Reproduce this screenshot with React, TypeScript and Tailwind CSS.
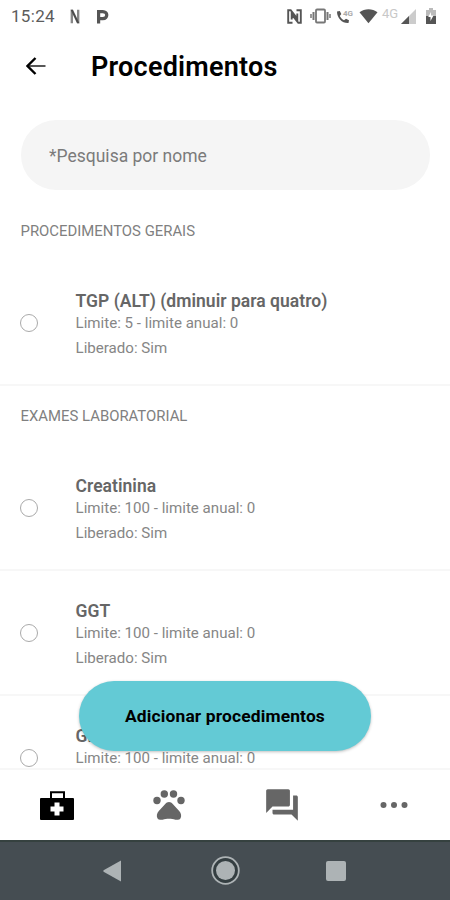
import { MdForum } from "react-icons/md";

type Procedure = {
  name: string;
  limit: number;
};

const general: Procedure[] = [{ name: "TGP (ALT) (dminuir para quatro)", limit: 5 }];

const lab: Procedure[] = [
  { name: "Creatinina", limit: 100 },
  { name: "GGT", limit: 100 },
  { name: "Glicose", limit: 100 },
];

const StatusBar = () => {
  return (
    <div className="h-8 shrink-0 flex items-center text-[#5c5c5c]">
      <div className="ml-[11px] w-[59px] text-[17px] leading-8 tracking-[0.3px]">15:24</div>
      <svg className="w-[10px] h-[17px]" viewBox="0 0 11 17">
        <path d="M2 1v15M9 1v15" stroke="#888" strokeWidth="2.6" />
        <path d="M.7 1h2.600l7 15H7.700z" fill="#4c4c4c" />
      </svg>
      <svg className="ml-4 w-[13px] h-[15px]" viewBox="0 0 13 15" fill="none" stroke="#555" strokeWidth="3.200">
        <path d="M2.600 14.500V2.600h4.200c5.300 0 5.300 7 0 7H2.600" />
      </svg>

      <div className="ml-auto mr-[14px] flex items-center">
        <svg className="w-[15px] h-[15px]" viewBox="0 0 15 15" fill="none" stroke="#555">
          <path d="M5.500 13.800H1.200V1.200h2.500l6.600 8.300V4.500M9.500 1.200h4.300v12.600h-2.500L4.700 5.500v5" strokeWidth="1.900" />
        </svg>
        <svg className="ml-2 w-[21px] h-4" viewBox="0 0 21 16" fill="none" stroke="#777">
          <rect x="6" y="1.500" width="9" height="13" rx="1" strokeWidth="1.800" />
          <path d="M3.500 4v8M17.500 4v8" strokeWidth="2" />
          <path d="M1 6v4M20 6v4" strokeWidth="1.500" />
        </svg>
        <svg className="ml-[5px] w-[18px] h-4" viewBox="0 0 18 16">
          <path
            d="M1 3.500 3.800 3l1.500 3-1.500 2c1 2 2.300 3.300 4.200 4.300l2-1.500 3 1.500-.5 2.700C6.500 15.500 1 10.500 1 3.500z"
            fill="#555"
          />
          <text x="7" y="7.500" fontSize="8" fontWeight="700" fill="#aaa">4G</text>
        </svg>
        <svg className="ml-[5px] w-[19px] h-4" viewBox="0 0 20 16">
          <path d="M.5 4C6-.2 14-.2 19.500 4L10 15.500z" fill="#555" />
        </svg>
        <div className="ml-[4px] w-[19px] text-[13px] leading-3 -mt-1 text-[#c8c8c8]">4G</div>
        <svg className="w-[15px] h-[15px]" viewBox="0 0 15 15">
          <path d="M15 0v15H0z" fill="#ccc" />
          <path d="M8 7v8H0z" fill="#555" />
        </svg>
        <svg className="ml-[10px] w-[10px] h-4" viewBox="0 0 10 16">
          <path d="M3 0h4v2h3v14H0V2h3z" fill="#bbb" />
          <path d="M0 8h10v8H0z" fill="#555" />
          <path d="M5 4 2.200 9H4.500v4l3-5.500H5z" fill="#fff" />
        </svg>
      </div>
    </div>
  );
};

const Header = () => {
  return (
    <div className="h-[88px] shrink-0 flex items-start pt-[15px]">
      <div className="w-[91px] h-10 flex items-center pl-[26px] pb-[2px]">
        <svg className="w-5 h-[18px]" viewBox="0 0 20 18" fill="none" stroke="#000">
          <path d="M1.500 9H19.500" stroke="#444" strokeWidth="1.800" />
          <path d="M9.500 1 1.500 9l8 8" strokeWidth="2.400" />
        </svg>
      </div>
      <h1 className="text-[27px] leading-10 font-semibold tracking-[0.220px] text-black">Procedimentos</h1>
    </div>
  );
};

const SectionTitle = ({ children }: { children: string }) => {
  return (
    <div className="h-[60px] shrink-0 px-[20.500px] text-[14.900px] leading-[60px] text-[#808080]">
      {children}
    </div>
  );
};

const Item = ({ name, limit }: Procedure) => {
  return (
    <div className="h-[125px] shrink-0 flex border-b-2 border-[#f7f7f7]">
      <div className="w-[75.500px] shrink-0 pl-5 pt-[53px]">
        <div className="w-[18px] h-[18px] rounded-full border border-[#aaa]" />
      </div>
      <div className="pt-[28px] whitespace-nowrap text-[15.100px] text-[#868686]">
        <div className="text-[17.500px] leading-6 font-semibold tracking-[0.030px] text-[#666]">{name}</div>
        <div className="leading-5">
          Limite: {limit} - limite anual: 0
        </div>
        <div className="leading-[30px]">Liberado: Sim</div>
      </div>
    </div>
  );
};

const TabBar = () => {
  return (
    <div className="h-[72px] shrink-0 grid grid-cols-4 place-items-center border-t-2 border-[#f7f7f7] bg-white text-[#666]">
      <svg className="ml-px w-[34px] h-[29px]" viewBox="0 0 34 29">
        <path d="M11 8V1.200h13V8" fill="none" stroke="#000" strokeWidth="2" />
        <rect y="7" width="34" height="22" rx="1" fill="#000" />
        <path d="M14.500 11.500h5v4h4v5h-4v4h-5v-4h-4v-5h4z" fill="#fff" />
      </svg>
      <svg className="w-8 h-[30px]" viewBox="0 0 32 30" fill="currentColor">
        <circle cx="4" cy="10.500" r="3.700" />
        <circle cx="11.300" cy="4" r="3.700" />
        <circle cx="20.500" cy="4" r="3.700" />
        <circle cx="28" cy="10.500" r="3.700" />
        <path d="M16 12c1.600 0 2.700.9 4 2.200l6.200 6.900c2 2.200 2.600 5.300 1.200 7.300-1 1.400-2.800 1.600-5 1.300-2.200-.4-4-.9-6.400-.9s-4.200.5-6.400.9c-2.200.3-4 .1-5-1.300-1.400-2-.8-5.100 1.200-7.300l6.200-6.900c1.300-1.300 2.400-2.200 4-2.200z" />
      </svg>
      <MdForum className="ml-[2px] w-[38px] h-[38px]" />
      <svg className="w-7 h-2" viewBox="0 0 28 8" fill="currentColor">
        <circle cx="3.500" cy="4" r="3" />
        <circle cx="14" cy="4" r="3" />
        <circle cx="24.500" cy="4" r="3" />
      </svg>
    </div>
  );
};

const SystemBar = () => {
  return (
    <div className="h-[60px] shrink-0 flex items-center pb-px border-t-2 border-[#35413f] bg-[#454d52]">
      <svg className="ml-[103px] w-[19px] h-[22px]" viewBox="0 0 19 22" fill="#adb3b5">
        <path d="M18 .5v21L1 12q-1.500-1 0-2z" />
      </svg>
      <svg className="ml-[89px] w-[29px] h-[29px]" viewBox="0 0 29 29">
        <circle cx="14.500" cy="14.500" r="13.300" fill="#343e41" stroke="#adb3b5" strokeWidth="1.800" />
        <circle cx="14.500" cy="14.500" r="9.500" fill="#adb3b5" />
      </svg>
      <div className="ml-[86px] w-5 h-5 rounded-[2px] bg-[#adb3b5]" />
    </div>
  );
};

export default function App() {
  return (
    <div className="relative w-[450px] h-[900px] flex flex-col overflow-hidden bg-white font-['Roboto',sans-serif]">
      <StatusBar />
      <Header />
      <div className="ml-[21px] mr-5 h-[70px] shrink-0 flex items-center rounded-full bg-[#f5f5f5] pl-7 pt-[2px]">
        <input
          className="w-full bg-transparent text-[17.500px] leading-6 placeholder:text-[#7b7b7b] focus:outline-none"
          placeholder="*Pesquisa por nome"
        />
      </div>
      <div className="mt-[11px] flex-1 min-h-0 flex flex-col overflow-hidden">
        <SectionTitle>PROCEDIMENTOS GERAIS</SectionTitle>
        {general.map((item) => (
          <Item key={item.name} {...item} />
        ))}
        <SectionTitle>EXAMES LABORATORIAL</SectionTitle>
        {lab.map((item) => (
          <Item key={item.name} {...item} />
        ))}
      </div>
      <button className="absolute left-[79px] top-[681px] w-[292px] h-[70px] rounded-full bg-[#63cad5] text-[17.400px] tracking-[0.150px] font-bold text-black shadow-[0_1px_3px_rgba(0,0,0,0.25)]">
        Adicionar procedimentos
      </button>
      <TabBar />
      <SystemBar />
    </div>
  );
}
